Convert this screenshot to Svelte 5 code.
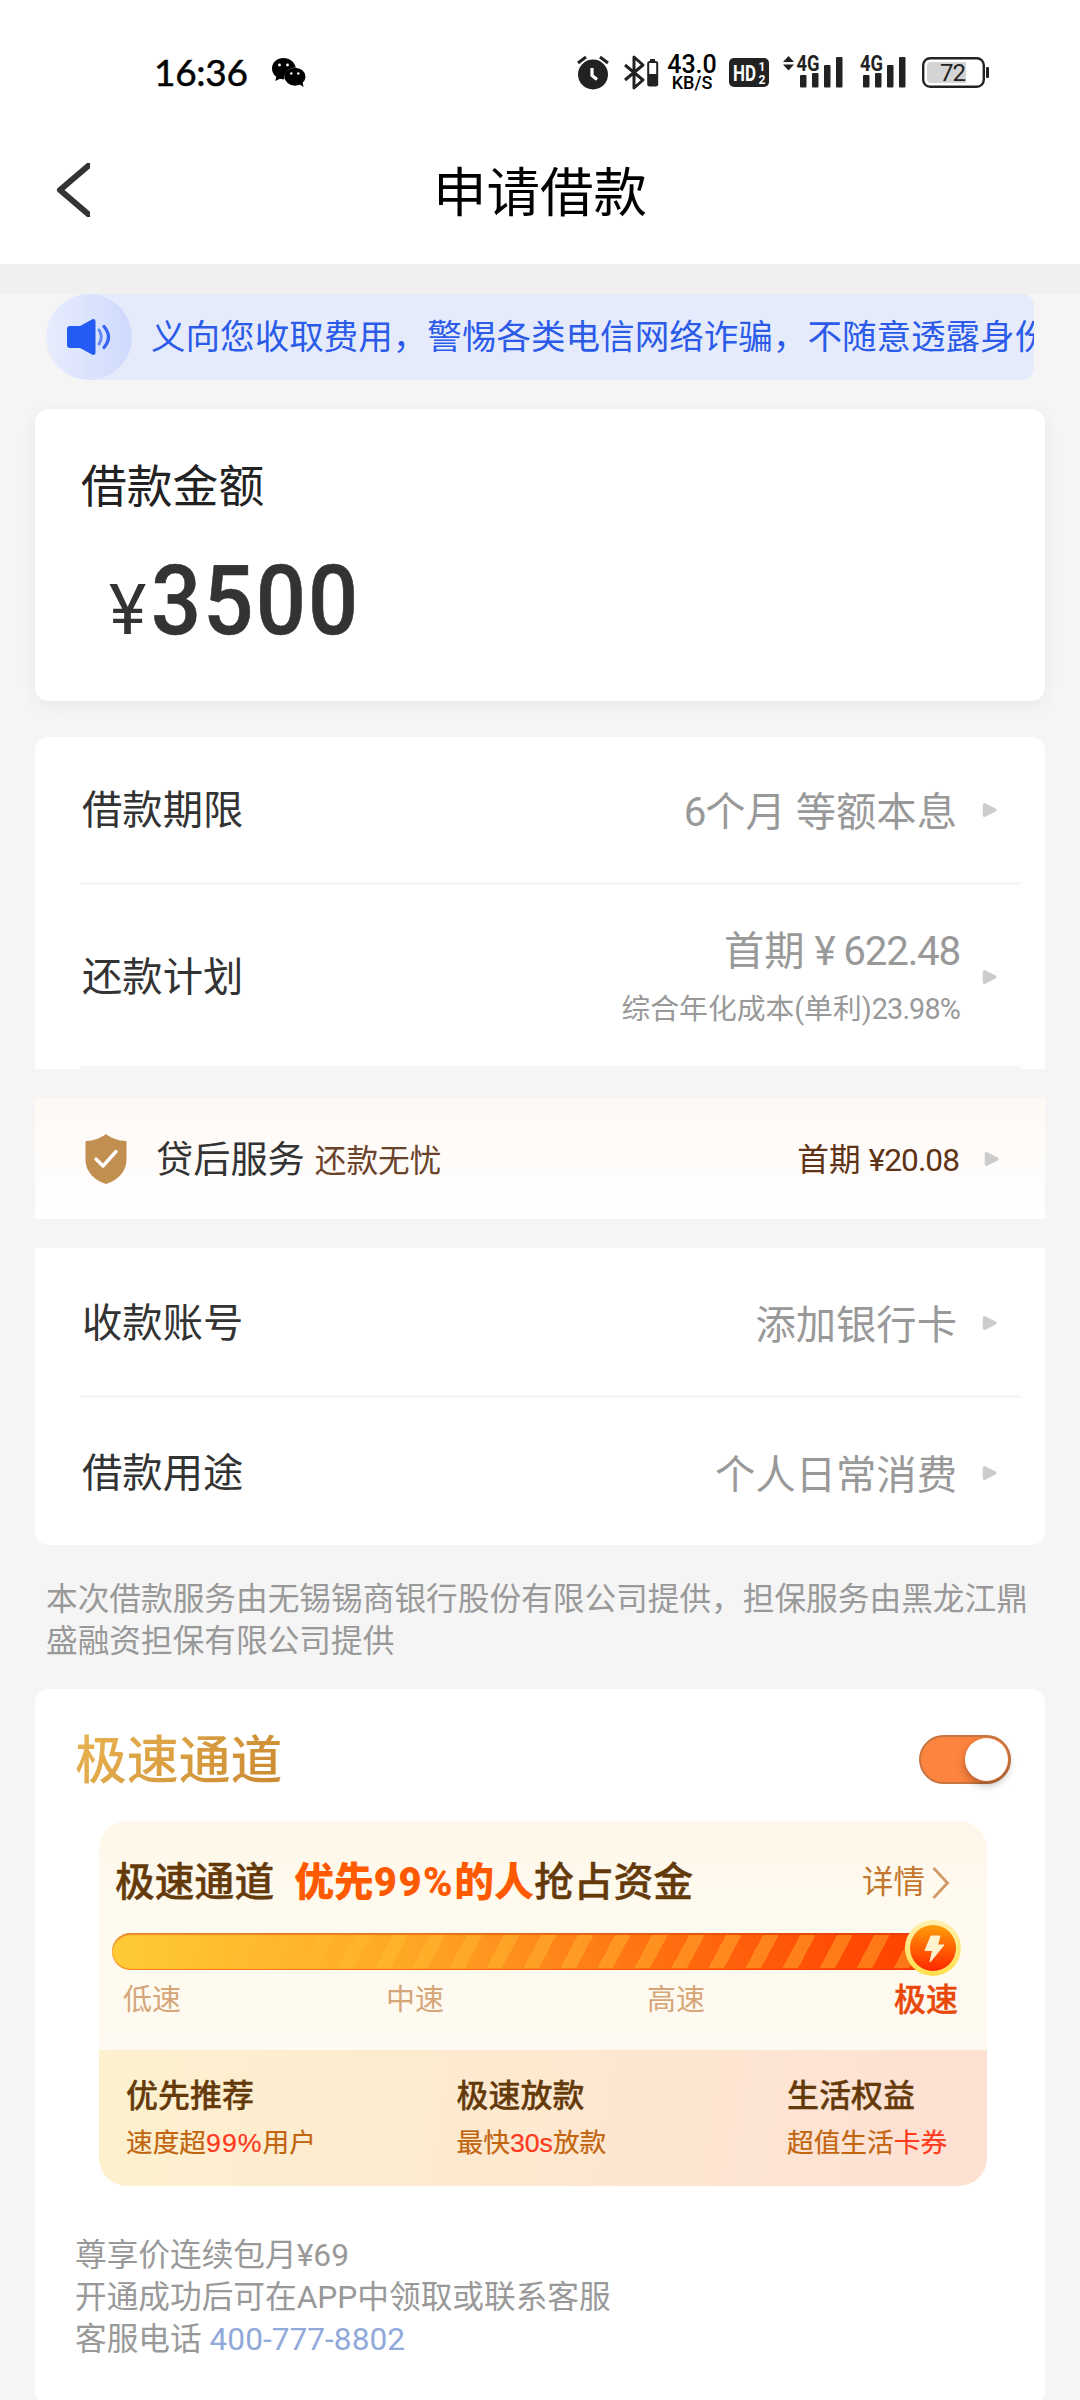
<script>
  const notice = '义向您收取费用，警惕各类电信网络诈骗，不随意透露身份'

  const benefits = [
    { title: '优先推荐', parts: [['速度超'], ['99%', true], ['用户']] },
    { title: '极速放款', parts: [['最快'], ['30s', true], ['放款']] },
    { title: '生活权益', parts: [['超值生活'], ['卡券', true]] }
  ]

  let fastLane = true
</script>

{#snippet arrow()}
  <svg class="arrow" width="16" height="16" viewBox="0 0 16 16">
    <path d="M2.500 2.800 L12.800 8 L2.500 13.200 Z" fill="#ccc" stroke="#ccc" stroke-width="3.600" stroke-linejoin="round" />
  </svg>
{/snippet}

<div class="page">
  <div class="status-bar">
    <div class="status-left">
      <span class="clock">16:36</span>
      <svg width="34" height="30" viewBox="0 0 34 30">
        <path d="M11.500 0C5 0 0 4.600 0 10.500c0 3.400 1.700 6.300 4.300 8.300L3.300 23l4.700-2.300c1.500.4 2.500.5 4.500.5-.8-6.400 4.400-11.700 11.300-11.700C22.600 4 17.500 0 11.500 0z" />
        <ellipse cx="23" cy="18.700" rx="10.500" ry="9" />
        <path d="M27 26l4.500 3-1-5z" />
        <circle cx="7.500" cy="7" r="1.400" fill="#fff" />
        <circle cx="15.500" cy="7" r="1.400" fill="#fff" />
        <circle cx="19.300" cy="15.500" r="1.200" fill="#fff" />
        <circle cx="26.300" cy="15.500" r="1.200" fill="#fff" />
      </svg>
    </div>
    <div class="status-right">
      <svg width="32" height="35" viewBox="0 0 32 35">
        <circle cx="16" cy="19.500" r="15" />
        <path d="M1 8l8-6M31 8l-8-6" stroke="#222" stroke-width="3" fill="none" />
        <path d="M15 13v7.500l5 4" stroke="#fff" stroke-width="3.200" fill="none" />
      </svg>
      <svg class="bluetooth" width="34" height="35" viewBox="0 0 34 35">
        <path d="M1 10l18 15-9 8V2l9 8L1 25" fill="none" stroke="#222" stroke-width="3" stroke-linejoin="round" />
        <path d="M26 4h5v2h-5z" />
        <rect x="24.200" y="7" width="9" height="23.500" rx="1.500" fill="none" stroke="#222" stroke-width="2" />
        <path d="M24 19h10v11H24z" />
      </svg>
      <div class="speed">
        <span class="speed-num">43.0</span>
        <span class="speed-unit">KB/S</span>
      </div>
      <svg class="hd" width="40" height="29" viewBox="0 0 40 29">
        <rect width="40" height="29" rx="5" />
        <text x="4" y="22.500" font-size="22" font-weight="700" fill="#fff" textLength="23" lengthAdjust="spacingAndGlyphs">HD</text>
        <text x="29.500" y="13" font-size="12" font-weight="700" fill="#fff">1</text>
        <text x="29.500" y="26" font-size="12" font-weight="700" fill="#fff">2</text>
      </svg>
      <svg class="signal" width="60" height="33" viewBox="0 0 60 33">
        <path d="M0 7l5.500-6L11 7zM0 9.500h11l-5.500 6z" />
        <text x="13.500" y="15.500" font-size="22" font-weight="700" textLength="23" lengthAdjust="spacingAndGlyphs">4G</text>
        <rect x="17" y="20" width="6.500" height="12.500" rx="1" />
        <rect x="29" y="18" width="6.500" height="14.500" rx="1" />
        <rect x="41" y="10" width="6.500" height="22.500" rx="1" />
        <rect x="53" y="2" width="6.500" height="30.500" rx="1" />
      </svg>
      <svg class="signal second" width="46" height="33" viewBox="0 0 46 33">
        <text x="0" y="15.500" font-size="22" font-weight="700" textLength="23" lengthAdjust="spacingAndGlyphs">4G</text>
        <rect x="3" y="20" width="6.500" height="12.500" rx="1" />
        <rect x="15" y="18" width="6.500" height="14.500" rx="1" />
        <rect x="27" y="10" width="6.500" height="22.500" rx="1" />
        <rect x="39" y="2" width="6.500" height="30.500" rx="1" />
      </svg>
      <svg class="battery" width="67" height="31" viewBox="0 0 67 31">
        <rect x="1.200" y="1.200" width="60.600" height="28.600" rx="7" fill="#fff" stroke="#222" stroke-width="2.400" />
        <path d="M9 5h35v21H9a4 4 0 0 1-4-4V9a4 4 0 0 1 4-4z" fill="#d4d4d4" />
        <text x="18" y="24" font-size="24" textLength="26">72</text>
        <rect x="64" y="10" width="3" height="11" rx="1" />
      </svg>
    </div>
  </div>

  <header class="nav">
    <svg class="back" width="34" height="54" viewBox="0 0 34 54">
      <path d="M38 -2 L4 27 L38 56" fill="none" stroke="#333" stroke-width="6" stroke-linejoin="round" />
    </svg>
    <h1>申请借款</h1>
  </header>

  <main>
    <div class="notice">
      <div class="horn">
        <svg width="44" height="36" viewBox="0 0 44 36">
          <path d="M3 7h10L25 .5c2-1 3.500 0 3.500 2v31c0 2-1.500 3-3.500 2L13 29H3c-2 0-3-1-3-3V10c0-2 1-3 3-3z" fill="#245bf5" />
          <path d="M32 11q4.500 7 0 14" fill="none" stroke="#5f86f5" stroke-width="2.800" stroke-linecap="round" />
          <path d="M37 7.500q9 10.500 0 21" fill="none" stroke="#3464f5" stroke-width="3.200" stroke-linecap="round" />
        </svg>
      </div>
      <div class="notice-text">{notice}</div>
    </div>

    <section class="card amount-card">
      <div class="amount-label">借款金额</div>
      <div class="amount"><span class="yen">¥</span><span class="value">3500</span></div>
    </section>

    <section class="card rows top">
      <div class="row line">
        <span class="label">借款期限</span>
        <span class="cell"><span class="num">6</span>个月 等额本息</span>
        {@render arrow()}
      </div>
      <div class="row line plan">
        <span class="label">还款计划</span>
        <span class="cell double">
          <span>首期 <span class="num">¥ 622.48</span></span>
          <small>综合年化成本(单利)<span class="num">23.98%</span></small>
        </span>
        {@render arrow()}
      </div>
    </section>

    <section class="service">
      <svg width="42" height="50" viewBox="0 0 42 50">
        <path d="M21 0C16 4 8 7 1.500 7 .5 7 .5 7.500 .5 8v18c0 12 10 21 20.500 24C31.500 47 41.500 38 41.500 26V8c0-.5 0-1-1-1C34 7 26 4 21 0z" fill="#c18f50" />
        <path d="M11 25l7 7 13-14.500" fill="none" stroke="#fff" stroke-width="3.400" stroke-linecap="round" stroke-linejoin="round" />
      </svg>
      <span class="service-name">贷后服务</span>
      <span class="service-tag">还款无忧</span>
      <span class="service-price">首期 <span class="num">¥20.08</span></span>
      {@render arrow()}
    </section>

    <section class="card rows bottom">
      <div class="row line">
        <span class="label">收款账号</span>
        <span class="cell">添加银行卡</span>
        {@render arrow()}
      </div>
      <div class="row">
        <span class="label">借款用途</span>
        <span class="cell">个人日常消费</span>
        {@render arrow()}
      </div>
    </section>

    <p class="provider">本次借款服务由无锡锡商银行股份有限公司提供，担保服务由黑龙江鼎盛融资担保有限公司提供</p>

    <section class="card fast">
      <div class="fast-head">
        <h2>极速通道</h2>
        <button class="toggle" class:on={fastLane} aria-label="极速通道" on:click={() => fastLane = !fastLane}>
          <span class="knob"></span>
        </button>
      </div>

      <div class="promo">
        <div class="promo-top">
          <div class="promo-title">
            <span>极速通道</span>
            <span class="hot">优先<span class="pct">99%</span>的人</span>
            <span>抢占资金</span>
            <span class="detail">详情</span>
            <svg width="18" height="34" viewBox="0 0 18 34">
              <path d="M1.500 2l14 15-14 15" fill="none" stroke="#d09a68" stroke-width="2.800" />
            </svg>
          </div>
          <div class="track">
            <div class="stripes"></div>
            <svg class="bolt" width="56" height="56" viewBox="0 0 56 56">
              <defs>
                <linearGradient id="bolt-fill" x1="0" y1="0" x2="0" y2="1">
                  <stop offset="0" stop-color="#ff9e08" />
                  <stop offset="1" stop-color="#ff2600" />
                </linearGradient>
                <linearGradient id="bolt-ring" x1="0" y1="0" x2="0" y2="1">
                  <stop offset="0" stop-color="#fff0b0" />
                  <stop offset="1" stop-color="#ffe04a" />
                </linearGradient>
              </defs>
              <circle cx="28" cy="28" r="28" fill="url(#bolt-ring)" />
              <circle cx="28" cy="28" r="23" fill="url(#bolt-fill)" />
              <path d="M26 16h9l-2.500 9H39L25 42l2.500-11.500H20z" fill="#fff4cf" stroke="#fff4cf" stroke-width="1" stroke-linejoin="round" />
            </svg>
          </div>
          <div class="speeds">
            <span>低速</span>
            <span>中速</span>
            <span>高速</span>
            <span class="current">极速</span>
          </div>
        </div>
        <div class="benefits">
          {#each benefits as item}
            <div class="benefit">
              <strong>{item.title}</strong>
              <div class="desc">{#each item.parts as [text, red]}<span class:red>{text}</span>{/each}</div>
            </div>
          {/each}
        </div>
      </div>

      <div class="terms">
        <div>尊享价连续包月¥69</div>
        <div>开通成功后可在APP中领取或联系客服</div>
        <div>客服电话 <span class="phone">400-777-8802</span></div>
      </div>
    </section>
  </main>
</div>

<style>
  :global(body) {
    background: #f5f5f5;
  }

  .page {
    width: 1080px;
    height: 2400px;
    overflow: hidden;
    background: #f5f5f5;
    color: #333;
    font-family: Roboto, 'Noto Sans CJK SC', sans-serif;
  }

  .page :global(*) {
    box-sizing: border-box;
  }

  svg {
    display: block;
    flex-shrink: 0;
    overflow: visible;
  }

  h1,
  h2,
  p {
    margin: 0;
  }

  .num {
    letter-spacing: -0.03em;
  }

  /* status bar */
  .status-bar {
    display: flex;
    justify-content: space-between;
    align-items: center;
    height: 145px;
    padding: 0 91px 0 154px;
    background: #fff;
  }

  .status-left,
  .status-right {
    display: flex;
    align-items: center;
  }

  .status-left {
    gap: 25px;
  }

  .status-right svg {
    fill: #222;
  }

  .clock {
    width: 93px;
    margin-top: -2px;
    font-family: Lato, Roboto, sans-serif;
    font-size: 37px;
    line-height: 40px;
    font-weight: 400;
    letter-spacing: -0.3px;
    color: #000;
    -webkit-text-stroke: 0.5px #000;
  }

  .bluetooth {
    margin-left: 15px;
  }

  .speed {
    display: flex;
    flex-direction: column;
    align-items: center;
    width: 50px;
    margin: 1px 0 0 9px;
    color: #000;
    font-weight: 500;
  }

  .speed-num {
    font-size: 25px;
    line-height: 19px;
  }

  .speed-unit {
    font-size: 18px;
    line-height: 18px;
  }

  .hd {
    margin-left: 12px;
  }

  .signal {
    margin: -2px 0 0 14px;
  }

  .signal.second {
    margin-left: 17px;
  }

  .battery {
    margin-left: 16px;
  }

  /* header */
  .nav {
    display: grid;
    grid-template-columns: 34px 1fr 34px;
    align-items: center;
    height: 119px;
    padding: 0 56px 29px;
    background: #fff;
  }

  .nav h1 {
    font-size: 53.5px;
    line-height: 60px;
    font-weight: 400;
    color: #000;
    text-align: center;
    padding-top: 8px;
  }

  .back {
    overflow: hidden;
  }

  main {
    padding: 0 35px;
    border-top: 30px solid #f0f0f0;
  }

  /* notice */
  .notice {
    display: flex;
    align-items: center;
    height: 86px;
    margin: 0 11px;
    background: #e6ebfc;
    border-radius: 43px 12px 12px 43px;
    overflow: hidden;
  }

  .horn {
    display: flex;
    align-items: center;
    justify-content: center;
    width: 86px;
    height: 86px;
    flex-shrink: 0;
    border-radius: 50%;
    background: linear-gradient(90deg, #e8edfd, #ced9fc);
  }

  .notice-text {
    flex: 1;
    margin-left: 19px;
    font-size: 34.56px;
    line-height: 44px;
    color: #2b5be8;
    white-space: nowrap;
    overflow: hidden;
  }

  /* cards */
  .card {
    background: #fff;
    border-radius: 14px;
  }

  .amount-card {
    height: 292px;
    margin-top: 29px;
    padding: 51px 46px 0;
    box-shadow: 0 4px 16px rgba(0, 0, 0, 0.06);
  }

  .amount-label {
    font-size: 45.8px;
    line-height: 56px;
    color: #222;
  }

  .amount {
    display: flex;
    align-items: baseline;
    height: 110px;
    margin-top: 30px;
    padding-left: 28px;
    line-height: 110px;
  }

  .yen {
    font-size: 71px;
    width: 42px;
  }

  /* narrow numerals */
  .value {
    font-size: 97px;
    font-weight: 500;
    letter-spacing: 2.4px;
    transform: scaleX(0.91);
    transform-origin: left;
    -webkit-text-stroke: 0.6px #333;
  }

  .rows.top {
    margin-top: 36px;
    border-radius: 14px 14px 0 0;
  }

  .rows.bottom {
    margin-top: 29px;
    border-radius: 0 0 14px 14px;
  }

  .row {
    display: flex;
    align-items: center;
    height: 148px;
    margin: 0 24px 0 45px;
    padding: 0 23px 0 2px;
  }

  .row.line {
    border-bottom: 3px solid #f5f5f5;
  }

  .row.plan {
    height: 184px;
    padding-top: 2px;
  }

  .rows.bottom .row {
    height: 147px;
    padding-top: 2px;
  }

  .rows.bottom .line {
    height: 150px;
  }

  .label {
    padding-top: 2px;
    font-size: 40.32px;
    line-height: 48px;
  }

  .cell {
    flex: 1;
    margin-right: 25px;
    padding-top: 6px;
    font-size: 40.32px;
    line-height: 48px;
    color: #999;
    text-align: right;
  }

  .double {
    display: flex;
    flex-direction: column;
    gap: 11px;
    margin-right: 22px;
  }

  .double small {
    font-size: 28.8px;
    line-height: 44px;
  }

  .service {
    display: flex;
    align-items: center;
    height: 121px;
    margin-top: 29px;
    padding: 1px 45px 0 50px;
    background: linear-gradient(#fef9f5, #fff);
  }

  .service-name {
    margin: 2px 0 0 29px;
    font-size: 37.2px;
    line-height: 46px;
  }

  .service-tag {
    margin: 6px 0 0 10px;
    font-size: 31.68px;
    line-height: 40px;
    color: #6b422a;
  }

  .service-price {
    margin: 4px 25px 0 auto;
    font-size: 31.68px;
    line-height: 40px;
    color: #5f3416;
  }

  .provider {
    width: 990px;
    margin: 34px 0 0 11px;
    font-size: 31.68px;
    line-height: 42px;
    color: #999;
  }

  /* fast lane */
  .fast {
    height: 716px;
    margin-top: 26px;
    padding: 40px 34px 0 40px;
  }

  .fast-head {
    display: flex;
    align-items: center;
    justify-content: space-between;
    height: 60px;
  }

  .fast-head h2 {
    margin-top: 5px;
    font-size: 51.84px;
    line-height: 60px;
    font-weight: 500;
    color: transparent;
    background: linear-gradient(135deg, #e9b452, #c98730);
    -webkit-background-clip: text;
    background-clip: text;
  }

  .toggle {
    display: flex;
    align-items: center;
    width: 92px;
    height: 49px;
    padding: 0 1px;
    border: 2px solid #c9753f;
    border-radius: 25px;
    background: #ddd;
  }

  .toggle.on {
    justify-content: flex-end;
    background: #fd843f;
  }

  .knob {
    width: 43px;
    height: 43px;
    border-radius: 50%;
    background: #fff;
    box-shadow: 0 4px 8px rgba(0, 0, 0, 0.3);
  }

  .promo {
    width: 888px;
    margin: 32px 0 0 24px;
    border-radius: 28px;
    overflow: hidden;
  }

  .promo-top {
    height: 229px;
    padding: 37px 26px 0 13px;
    background: linear-gradient(#fef7e9, #fffaee 30%, #fffaf1);
  }

  .promo-title {
    display: flex;
    align-items: center;
    height: 50px;
    padding: 0 11px 0 3px;
    font-size: 39.8px;
    line-height: 50px;
    font-weight: 500;
    color: #653a0b;
    -webkit-text-stroke: 0.4px #653a0b;
  }

  .hot {
    margin-left: 20px;
    color: #ff5a00;
    font-weight: 900;
    -webkit-text-stroke: 0;
  }

  .pct {
    letter-spacing: 1.6px;
  }

  .detail {
    margin: 0 7px 0 auto;
    font-size: 31.5px;
    font-weight: 400;
    color: #c4762f;
    -webkit-text-stroke: 0;
  }

  .track {
    position: relative;
    height: 37px;
    width: 830px;
    margin-top: 25px;
    border-radius: 19px;
    background: linear-gradient(90deg, #ffcb36, #ffa826 35%, #ff7a14 60%, #ff4a04 88%, #ff4000);
    box-shadow: inset 0 2px 1px rgba(200, 60, 20, 0.45), inset 0 -1px 1px rgba(240, 50, 0, 0.5);
  }

  .stripes {
    height: 33px;
    border-radius: 19px;
    transform: translateY(2px);
    background: repeating-linear-gradient(118deg, transparent 0 19px, rgba(255, 190, 52, 0.42) 19px 32.7px);
    -webkit-mask-image: linear-gradient(90deg, transparent 8%, #000 30%);
    mask-image: linear-gradient(90deg, transparent 8%, #000 30%);
  }

  .bolt {
    position: absolute;
    right: -19px;
    top: -13px;
  }

  .speeds {
    display: grid;
    grid-template-columns: 263px 261px 247px auto;
    margin-top: 9px;
    padding-left: 11px;
    font-size: 29px;
    line-height: 42px;
    color: #d6a679;
  }

  .current {
    font-size: 32px;
    font-weight: 500;
    color: #e8480a;
    -webkit-text-stroke: 0.4px #e8480a;
  }

  .benefits {
    display: grid;
    grid-template-columns: 330.5px 330.5px 1fr;
    height: 136px;
    padding: 24px 0 0 27px;
    background: linear-gradient(100deg, #fdf1cf, #fde8d0 50%, #fde2d4 90%);
  }

  .benefit strong {
    display: block;
    font-size: 32px;
    line-height: 44px;
    font-weight: 500;
    color: #653a0b;
    -webkit-text-stroke: 0.3px #653a0b;
  }

  .desc {
    margin-top: 3px;
    font-family: 'Liberation Sans', 'Noto Sans CJK SC', sans-serif;
    font-size: 26.7px;
    line-height: 44px;
    color: #c2650f;
    -webkit-text-stroke: 0.2px currentColor;
  }

  .benefit:first-child .red {
    letter-spacing: 1px;
  }

  .red {
    color: #ff3a1e;
  }

  .terms {
    margin-top: 49px;
    font-size: 31.68px;
    line-height: 42px;
    color: #999;
  }

  .phone {
    color: #91a9da;
  }
</style>
